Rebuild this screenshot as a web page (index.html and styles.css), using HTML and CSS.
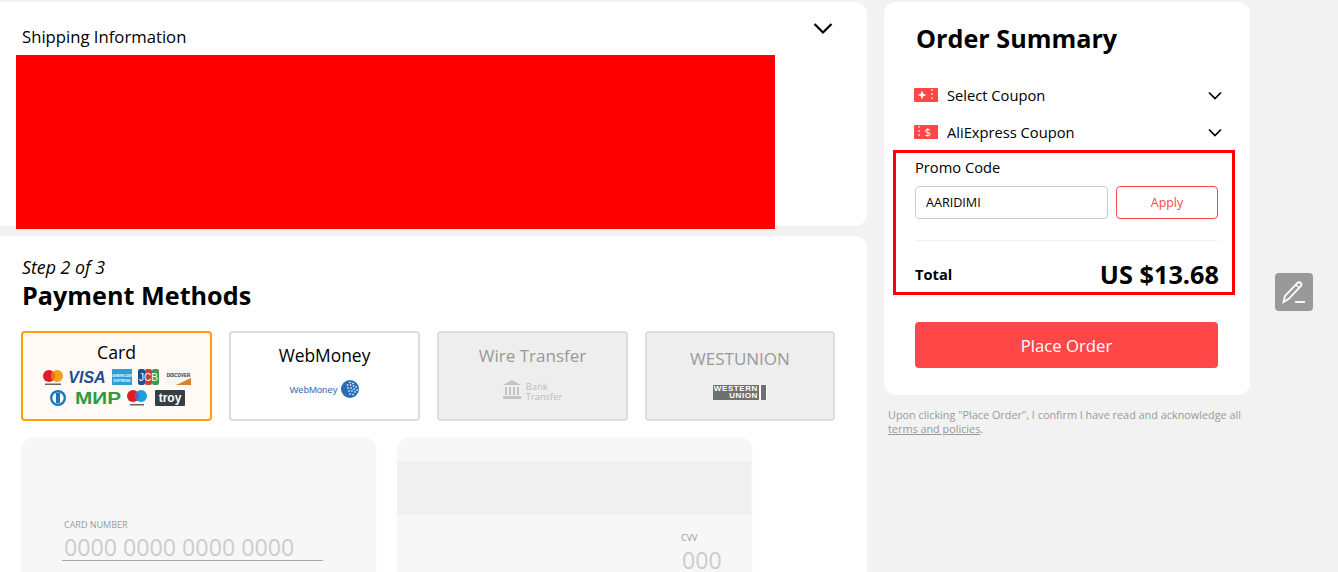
FILE: index.html
```html
<!DOCTYPE html>
<html lang="en">
<head>
    <meta charset="UTF-8">
    <meta name="viewport" content="width=device-width, initial-scale=1.0">
    <title>Checkout</title>
    <link rel="stylesheet" href="styles.css">
</head>
<body>
    <div class="page">
        <!-- Left Column -->
        <div class="main-col">
            <!-- Shipping -->
            <section class="panel shipping">
                <h3 class="shipping-title">Shipping Information</h3>
                <svg class="shipping-chevron" width="20" height="14" viewBox="0 0 20 14"><path d="M1.500 2l8.500 8.500L18.500 2" fill="none" stroke="#000" stroke-width="2.200"/></svg>
                <div class="redacted"></div>
            </section>

            <!-- Payment -->
            <section class="panel payment">
                <p class="step">Step 2 of 3</p>
                <h2 class="payment-title">Payment Methods</h2>

                <div class="methods">
                    <div class="method active">
                        <div class="method-name card-name">Card</div>
                        <div class="logo-row">
                            <svg width="20" height="21" viewBox="0 0 20 21"><circle cx="6" cy="7" r="6" fill="#e01b22"/><circle cx="14" cy="7" r="6" fill="#f79e1b"/><path d="M10 2.500a6 6 0 0 1 0 9 6 6 0 0 1 0-9z" fill="#ee6a1c"/><rect x="2" y="14.500" width="16" height="1.500" fill="#666"/></svg>
                            <svg width="36" height="16" viewBox="0 0 36 16"><text x="18" y="14" text-anchor="middle" class="visa-text">VISA</text></svg>
                            <svg width="20" height="16" viewBox="0 0 20 16"><rect width="20" height="16" fill="#2f9fd8"/><text x="10" y="7.500" text-anchor="middle" class="amex-text">AMERICAN</text><text x="10" y="12.500" text-anchor="middle" class="amex-text">EXPRESS</text></svg>
                            <svg width="21" height="16" viewBox="0 0 21 16"><rect width="7" height="16" rx="2" fill="#1f4e96"/><rect x="7" width="7" height="16" rx="2" fill="#c8413c"/><rect x="14" width="7" height="16" rx="2" fill="#3c9a4a"/><text x="10.500" y="12" text-anchor="middle" class="jcb-text">JCB</text></svg>
                            <svg width="25" height="16" viewBox="0 0 25 16"><rect width="25" height="16" fill="#f6f6f6"/><path d="M10 16L25 9v7z" fill="#d9822b"/><text x="12.500" y="8" text-anchor="middle" class="discover-text">DISCOVER</text></svg>
                        </div>
                        <div class="logo-row">
                            <svg width="20" height="16" viewBox="0 0 20 16"><circle cx="10" cy="8" r="8" fill="#1a78b8"/><circle cx="10" cy="8" r="5.600" fill="#fff"/><rect x="8" y="3" width="4" height="10" fill="#1a78b8"/></svg>
                            <svg width="46" height="16" viewBox="0 0 46 16"><text x="0" y="14" class="mir-text" textLength="46" lengthAdjust="spacingAndGlyphs">МИР</text></svg>
                            <svg width="20" height="19" viewBox="0 0 20 19"><circle cx="6" cy="6" r="6" fill="#dd1c26"/><circle cx="14" cy="6" r="6" fill="#1aa0dc"/><path d="M10 1.500a6 6 0 0 1 0 9 6 6 0 0 1 0-9z" fill="#6c5fb0"/><rect x="3" y="14" width="14" height="1.500" fill="#666"/></svg>
                            <svg class="troy-logo" width="30" height="16" viewBox="0 0 30 16"><rect width="30" height="16" rx="1" fill="#363f44"/><text x="15" y="12" text-anchor="middle" class="troy-text">troy</text></svg>
                        </div>
                    </div>

                    <div class="method">
                        <div class="method-name wm-name">WebMoney</div>
                        <div class="method-logo wm-logo">
                            <span class="wm-text">WebMoney</span>
                            <svg width="18" height="18" viewBox="0 0 18 18"><circle cx="9" cy="9" r="9" fill="#2a6bb5"/><g fill="#fff"><path d="M8 2.500l1-1 1 1-1 1zM11 3.500l1-1 1 1-1 1zM5.500 5l1-1 1 1-1 1zM8.500 5l1-1 1 1-1 1zM11.500 6l1-1 1 1-1 1zM14 7l1-1 1 1-1 1zM6 8l1-1 1 1-1 1zM9 8l1-1 1 1-1 1zM12 9l1-1 1 1-1 1zM15 10l1-1 1 1-1 1zM7 11l1-1 1 1-1 1zM10 11l1-1 1 1-1 1zM13 12l1-1 1 1-1 1zM8 14l1-1 1 1-1 1zM11 14.500l1-1 1 1-1 1z"/></g></svg>
                        </div>
                    </div>

                    <div class="method disabled">
                        <div class="method-name">Wire Transfer</div>
                        <div class="method-logo bank-logo">
                            <svg width="18" height="20" viewBox="0 0 18 20"><path d="M9 0l9 5H0z" fill="#c4c4c4"/><path d="M2 7h2v8H2zM6 7h2v8H6zM10 7h2v8h-2zM14 7h2v8h-2z" fill="#c4c4c4"/><rect y="16" width="18" height="3" fill="#c4c4c4"/></svg>
                            <span class="bank-text">Bank<br>Transfer</span>
                        </div>
                    </div>

                    <div class="method disabled">
                        <div class="method-name wu-name">WESTUNION</div>
                        <div class="method-logo">
                            <div class="wu-logo">
                                <span class="wu-text">WESTERN<br>UNION</span>
                                <span class="wu-bars"></span>
                            </div>
                        </div>
                    </div>
                </div>

                <!-- Card Form -->
                <div class="card-forms">
                    <div class="credit-card front">
                        <label class="field-label">CARD NUMBER</label>
                        <div class="card-number">0000 0000 0000 0000</div>
                    </div>
                    <div class="credit-card back">
                        <div class="stripe"></div>
                        <div class="cvv">
                            <label class="field-label">CVV</label>
                            <div class="cvv-value">000</div>
                        </div>
                    </div>
                </div>
            </section>
        </div>

        <!-- Right Column -->
        <aside class="side-col">
            <section class="panel summary">
                <h2 class="summary-title">Order Summary</h2>

                <div class="coupon-row first">
                    <svg width="24" height="14" viewBox="0 0 24 14"><path d="M1 0h22a1 1 0 0 1 1 1v12a1 1 0 0 1-1 1H1a1 1 0 0 1-1-1V1a1 1 0 0 1 1-1z" fill="#ff4747"/><path d="M8 2.500l1.200 3.300 3.300 1.200-3.300 1.200L8 11.500 6.800 8.200 3.500 7l3.300-1.200z" fill="#fff"/><path d="M18 1v12" stroke="#fff" stroke-dasharray="2 2"/></svg>
                    <span class="coupon-label">Select Coupon</span>
                    <svg class="row-chevron" width="14" height="9" viewBox="0 0 14 9"><path d="M1 1.500l6 6 6-6" fill="none" stroke="#000" stroke-width="1.700"/></svg>
                </div>
                <div class="coupon-row">
                    <svg width="24" height="14" viewBox="0 0 24 14"><path d="M1 0h22a1 1 0 0 1 1 1v12a1 1 0 0 1-1 1H1a1 1 0 0 1-1-1V1a1 1 0 0 1 1-1z" fill="#ff4747"/><path d="M5 1v12" stroke="#fff" stroke-dasharray="2 2"/><text x="14" y="11" text-anchor="middle" class="coupon-dollar">$</text></svg>
                    <span class="coupon-label">AliExpress Coupon</span>
                    <svg class="row-chevron" width="14" height="9" viewBox="0 0 14 9"><path d="M1 1.500l6 6 6-6" fill="none" stroke="#000" stroke-width="1.700"/></svg>
                </div>

                <div class="promo-label">Promo Code</div>
                <div class="promo-row">
                    <input class="promo-input" type="text" value="AARIDIMI">
                    <button class="apply-btn">Apply</button>
                </div>

                <div class="total-row">
                    <span class="total-label">Total</span>
                    <span class="total-price">US $13.68</span>
                </div>

                <button class="place-order">Place Order</button>

                <div class="highlight"></div>
            </section>

            <p class="terms">Upon clicking "Place Order", I confirm I have read and acknowledge all <a href="#terms">terms and policies</a>.</p>
        </aside>

        <!-- Feedback Button -->
        <div class="feedback">
            <svg width="24" height="24" viewBox="0 0 24 24" fill="none" stroke="#fff"><path d="M1.500 22l1.500-6L15.500 3a2.300 2.300 0 0 1 3.300 3.200L6.500 19z" stroke-width="1.800"/><path d="M14 5l3.500 3" stroke-width="1.300"/><path d="M13 22h10" stroke-width="1.800"/></svg>
        </div>
    </div>
</body>
</html>
```

FILE: styles.css
```css
/* Global Styles */
html, body {
    height: 100%;
}

body {
    font-family: 'Open Sans', sans-serif;
    margin: 0;
    padding: 0;
    background-color: #f2f2f2;
    color: #000;
    overflow: hidden;
}

.page {
    display: flex;
    align-items: flex-start;
    height: 572px;
    padding-top: 2px;
    box-sizing: border-box;
    overflow: hidden;
}

.panel {
    background-color: #fff;
    border-radius: 0 12px 12px 0;
}

/* Left Column */
.main-col {
    width: 867px;
    flex-shrink: 0;
    margin-right: 17px;
}

/* Shipping */
.shipping {
    position: relative;
    height: 224px;
    margin-bottom: 10px;
}

.shipping-title {
    margin: 0;
    padding: 24px 0 0 22px;
    font-size: 16.700px;
    font-weight: 400;
    line-height: 22px;
}

.shipping-chevron {
    position: absolute;
    top: 20px;
    left: 813px;
}

.redacted {
    position: absolute;
    top: 53px;
    left: 16px;
    width: 759px;
    height: 174px;
    background-color: #f00;
}

/* Payment */
.payment {
    height: 400px;
    padding: 21px 0 0 22px;
    box-sizing: border-box;
}

.step {
    margin: 0;
    font-size: 17.800px;
    font-style: italic;
    line-height: 21px;
}

.payment-title {
    margin: 0 0 19px;
    font-size: 25.200px;
    font-weight: 700;
    line-height: 34px;
}

.methods {
    display: flex;
    gap: 17px;
    margin-left: -1px;
}

.method {
    width: 191px;
    height: 90px;
    box-sizing: border-box;
    border: 2px solid #ddd;
    border-radius: 4px;
    text-align: center;
}

.method:last-child {
    width: 190px;
}

.method.active {
    border-color: #ff9e0d;
    background-color: #fffaf5;
}

.method.disabled {
    background-color: #eee;
    color: #999;
}

.method-name {
    margin-top: 11px;
    font-size: 17px;
    line-height: 24px;
}

.card-name {
    margin-top: 7px;
    margin-bottom: 5px;
    font-size: 17.700px;
}

.wm-name {
    margin-top: 10px;
    font-size: 17.400px;
}

.wu-name {
    margin-top: 14px;
}

.logo-row {
    display: flex;
    justify-content: center;
    align-items: flex-start;
    gap: 6.500px;
    height: 21px;
}

.troy-logo {
    margin-left: 1.500px;
}

.method-logo {
    display: flex;
    justify-content: center;
    align-items: center;
    gap: 4px;
    height: 20px;
    margin-top: 11px;
}

.wm-logo {
    margin-top: 12px;
}

.bank-logo {
    margin-top: 12px;
}

.wm-text {
    font-family: 'Liberation Sans', sans-serif;
    font-size: 9.500px;
    color: #2a6bb5;
}

.bank-text {
    margin: 4px 0 0 1px;
    font-size: 9.300px;
    line-height: 10px;
    color: #bbb;
    text-align: left;
}

.wu-logo {
    display: flex;
    width: 54px;
    height: 15px;
    background-color: #707070;
}

.wu-text {
    width: 45px;
    font-family: 'Liberation Sans', sans-serif;
    font-size: 8px;
    font-weight: 900;
    line-height: 7.500px;
    color: #fff;
    text-align: right;
    letter-spacing: 0.6px;
}

.wu-bars {
    flex: 1;
    border-left: 2px solid #fff;
    border-right: 1px solid #fff;
    margin-left: 1px;
}

.visa-text {
    font-family: 'Liberation Sans', sans-serif;
    font-size: 16px;
    font-weight: 700;
    font-style: italic;
    fill: #1f4e96;
}

.amex-text {
    font-family: 'Liberation Sans', sans-serif;
    font-size: 3.600px;
    font-weight: 700;
    fill: #e6f4fb;
}

.jcb-text {
    font-family: 'Liberation Sans', sans-serif;
    font-size: 10px;
    fill: #fff;
}

.discover-text {
    font-family: 'Liberation Sans', sans-serif;
    font-size: 4.500px;
    font-weight: 700;
    fill: #333;
}

.mir-text {
    font-family: 'Liberation Sans', sans-serif;
    font-size: 17px;
    font-weight: 700;
    fill: #2f9a41;
}

.troy-text {
    font-family: 'Liberation Sans', sans-serif;
    font-size: 12px;
    font-weight: 700;
    fill: #fff;
}

.coupon-dollar {
    font-family: 'Open Sans', sans-serif;
    font-size: 11px;
    fill: #fff;
}

/* Card Form */
.card-forms {
    display: flex;
    gap: 22px;
    margin: 17px 0 0 -1px;
}

.credit-card {
    width: 354px;
    height: 200px;
    background-color: #f7f7f7;
    border-radius: 12px;
    box-shadow: 1px 0 2px rgba(0, 0, 0, 0.05);
}

.front {
    padding: 81px 0 0 41px;
    box-sizing: border-box;
}

.field-label {
    display: block;
    margin-left: 2px;
    font-size: 9px;
    line-height: 12px;
    color: #999;
}

.card-number {
    width: 261px;
    box-sizing: border-box;
    margin-top: 2px;
    padding: 1px 0 0 2px;
    border-bottom: 1px solid #aaa;
    font-size: 23.200px;
    line-height: 26px;
    color: #ccc;
}

.back {
    padding-top: 23px;
    box-sizing: border-box;
}

.stripe {
    height: 54px;
    background-color: #f0f0f0;
}

.cvv {
    margin: 17px 0 0 282px;
}

.cvv-value {
    margin: 1px 0 0 3px;
    font-size: 23.200px;
    line-height: 30px;
    color: #ccc;
}

/* Right Column */
.side-col {
    width: 366px;
    flex-shrink: 0;
}

.summary {
    position: relative;
    height: 393px;
    padding: 0 32px 0 31px;
    box-sizing: border-box;
    border-radius: 12px;
}

.summary-title {
    margin: 0 0 0 1px;
    padding-top: 18px;
    font-size: 25.200px;
    font-weight: 700;
    line-height: 36px;
}

.coupon-row {
    display: flex;
    align-items: center;
    height: 22px;
    margin: 15px -4px 0 -1px;
}

.coupon-row.first {
    margin-top: 28px;
}

.coupon-label {
    margin-left: 9px;
    font-size: 14.700px;
}

.row-chevron {
    margin-left: auto;
}

.promo-label {
    margin: 14px 0 0;
    font-size: 14.700px;
    line-height: 20px;
}

.promo-row {
    display: flex;
    gap: 8px;
    margin-top: 9px;
    padding-bottom: 21px;
    border-bottom: 1px solid #f0f0f0;
}

.promo-input {
    width: 193px;
    height: 33px;
    box-sizing: border-box;
    padding: 0 10px;
    border: 1px solid #ccc;
    border-radius: 4px;
    font-family: 'Open Sans', sans-serif;
    font-size: 12.600px;
    color: #000;
}

.apply-btn {
    flex: 1;
    height: 33px;
    padding: 0;
    background-color: #fff;
    border: 1px solid #ff4747;
    border-radius: 4px;
    font-family: 'Open Sans', sans-serif;
    font-size: 12.400px;
    color: #ff4747;
}

.total-row {
    display: flex;
    justify-content: space-between;
    align-items: center;
    margin: 16px -1px 0 0;
    height: 34px;
}

.total-label {
    font-size: 14.700px;
    font-weight: 700;
}

.total-price {
    font-size: 25.300px;
    font-weight: 700;
}

.place-order {
    display: block;
    width: 100%;
    height: 46px;
    margin-top: 31px;
    background-color: #ff4747;
    border: none;
    border-radius: 4px;
    font-family: 'Open Sans', sans-serif;
    font-size: 16.700px;
    color: #fff;
}

.highlight {
    position: absolute;
    top: 148px;
    left: 9px;
    width: 342px;
    height: 145px;
    box-sizing: border-box;
    border: 3px solid #f00;
}

.terms {
    margin: 13px 0 0 4px;
    font-size: 10.850px;
    line-height: 14px;
    color: #999;
}

.terms a {
    color: #999;
    text-decoration: underline;
}

/* Feedback Button */
.feedback {
    position: absolute;
    top: 273px;
    left: 1275px;
    display: flex;
    align-items: center;
    justify-content: center;
    width: 38px;
    height: 38px;
    background-color: #999;
    border-radius: 4px;
}
```
